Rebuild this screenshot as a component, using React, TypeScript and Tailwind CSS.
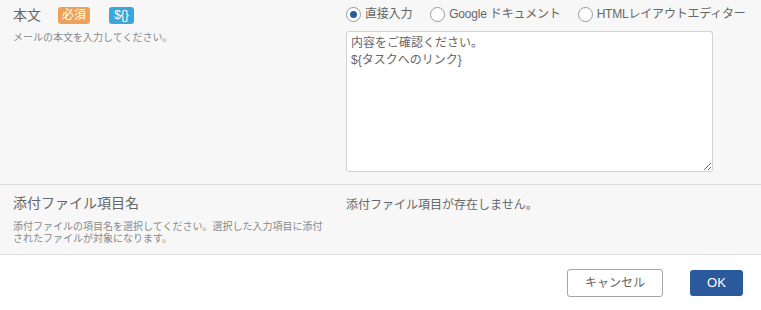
import React, { useState } from 'react';

const font = { fontFamily: '"Liberation Sans", "Noto Sans CJK JP", sans-serif' };

const options = [
  { id: 'direct', label: '直接入力' },
  { id: 'google', label: 'Google ドキュメント' },
  { id: 'html', label: 'HTMLレイアウトエディター' },
];

export default function App() {
  const [mode, setMode] = useState('direct');

  return (
    <div className="w-[761px] h-[310px] bg-white text-[#666] overflow-hidden" style={font}>
      {/* 本文 */}
      <div className="flex bg-[#f7f7f7] border-b border-[#dcdcdc] h-[185px]">
        <div className="w-[346px] shrink-0 pl-[13px] pr-[20px] pt-[6px]">
          <div className="flex items-center h-[18px]">
            <span className="text-[14px] leading-[18px] text-[#666]">本文</span>
            <span className="ml-[17px] h-[17px] w-[32px] flex items-center justify-center rounded-[3px] bg-[#eda257] text-white text-[12px] leading-none">
              必須
            </span>
            <span className="ml-[19px] h-[17px] w-[25px] flex items-center justify-center rounded-[3px] bg-[#3ba6d9] text-white text-[12px] leading-none">
              ${'{}'}
            </span>
          </div>
          <p className="mt-[7px] text-[10px] leading-[14px] text-[#888]">メールの本文を入力してください。</p>
        </div>
        <div className="flex-1 pt-[5px] pr-[48px]">
          <div className="flex items-center h-[18px]">
            {options.map((o, i) => (
              <label
                key={o.id}
                className={`flex items-center cursor-pointer ${i === 1 ? 'ml-[18px]' : i === 2 ? 'ml-[17px]' : ''}`}
                onClick={() => setMode(o.id)}
              >
                <span className="w-[15px] h-[15px] rounded-full border border-[#9a9a9a] bg-white flex items-center justify-center shrink-0">
                  {mode === o.id && <span className="w-[7px] h-[7px] rounded-full bg-[#2b5a9c]" />}
                </span>
                <span className="ml-[4px] text-[12px] leading-[18px] whitespace-nowrap text-[#666] tracking-[-0.2px]">{o.label}</span>
              </label>
            ))}
          </div>
          <textarea
            className="mt-[8px] block w-[367px] h-[141px] bg-white border border-[#d2d2d2] rounded-[3px] pl-[4px] pt-[3px] text-[12px] leading-[17px] text-[#666] outline-none"
            style={font}
            defaultValue={'内容をご確認ください。\n${タスクへのリンク}'}
          />
        </div>
      </div>

      {/* 添付ファイル項目名 */}
      <div className="flex bg-[#f7f7f7] border-b border-[#dcdcdc] h-[70px]">
        <div className="w-[346px] shrink-0 pl-[13px] pr-[20px] pt-[8px]">
          <div className="text-[14px] leading-[20px] text-[#666]">添付ファイル項目名</div>
          <p className="mt-[8px] text-[10px] leading-[12px] text-[#888]">
            添付ファイルの項目名を選択してください。選択した入力項目に添付されたファイルが対象になります。
          </p>
        </div>
        <div className="flex-1 pt-[7px]">
          <span className="text-[12px] leading-[16px] text-[#666]">添付ファイル項目が存在しません。</span>
        </div>
      </div>

      {/* footer */}
      <div className="flex items-center justify-end gap-[27px] pr-[18px] h-[55px]">
        <button className="w-[96px] h-[28px] border border-[#a5a5a5] rounded-[3px] bg-white text-[12px] text-[#666]">
          キャンセル
        </button>
        <button className="w-[53px] h-[26px] rounded-[3px] bg-[#2b5a9c] text-white text-[13px]">OK</button>
      </div>
    </div>
  );
}
